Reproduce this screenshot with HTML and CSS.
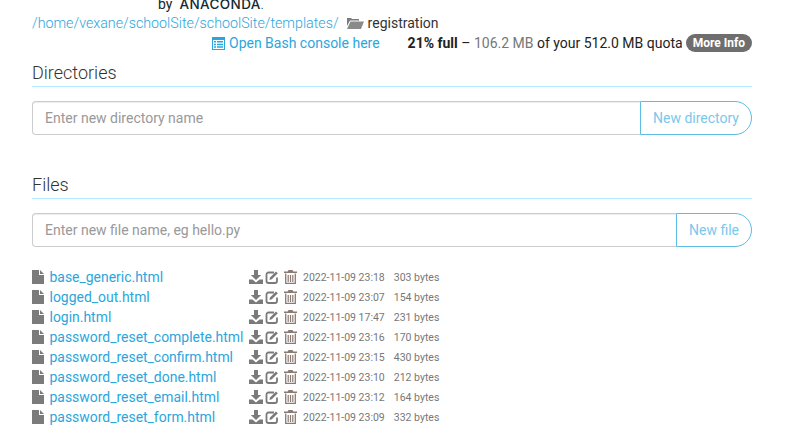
FILE: index.html
```html
<!DOCTYPE html>
<html lang="en">
<head>
<meta charset="utf-8">
<title>File browser</title>
<link rel="stylesheet" href="styles.css">
</head>
<body>
<svg class="defs" width="0" height="0" aria-hidden="true">
  <symbol id="i-file" viewBox="0 0 12 14"><path fill="#7b7b7b" d="M0 0h7v5h5v9H0z"/><path fill="#7b7b7b" d="M8 0l4 4H8z"/></symbol>
  <symbol id="i-dl" viewBox="0 0 14 14"><path fill="#7a7a7a" d="M5 0h4v5h3.2L7 10 1.8 5H5zM0 9.5h3.5L7 12.5l3.500-3H14V14H0z"/></symbol>
  <symbol id="i-edit" viewBox="0 0 14 14"><path fill="none" stroke="#7a7a7a" stroke-width="1.800" d="M9 2.500H3.500a2 2 0 0 0-2 2v6.500a2 2 0 0 0 2 2H10a2 2 0 0 0 2-2V7.500"/><path fill="#7a7a7a" d="M5 7.500L11 1.500l1.800 1.800-6 6L4.500 10z"/></symbol>
  <symbol id="i-trash" viewBox="0 0 13 14"><path fill="#8a7a72" d="M4.500 0h4l.8 1.500H13V3H0V1.500h3.700z"/><path fill="none" stroke="#8a7a72" stroke-width="1.300" d="M1.700 3.500v9.800h9.600V3.500"/><path stroke="#8a7a72" stroke-width="1.200" d="M4.200 5v7M6.500 5v7M8.800 5v7"/></symbol>
</svg>
<div class="page">
  <div class="brand"><span class="by">by</span><span class="anaconda">ANACONDA<small>.</small></span></div>
  <div class="crumbs">
    <a href="#">/home</a><a href="#">/vexane</a><a href="#">/schoolSite</a><a href="#">/schoolSite</a><a href="#">/templates</a><a href="#">/</a>
    <svg class="folder" viewBox="0 0 17 12" aria-hidden="true"><path fill="#7b7b7b" d="M0 2V1h4l1 1h7v1.500H3L0 9z"/><path fill="#8a8a8a" d="M3.500 4.500H17L14 12H0z"/></svg>
    <span class="current">registration</span>
  </div>
  <div class="status">
    <a class="bash" href="#"><svg class="console" viewBox="0 0 13 13" aria-hidden="true"><path fill="#2ba6dc" d="M0 0h13v13H0z"/><path fill="#fff" d="M1 3h11v9H1z"/><path fill="#2ba6dc" d="M2 4h2v1.500H2zM5 4h6v1.500H5zM2 6.700h2v1.500H2zM5 6.700h6v1.500H5zM2 9.300h2v1.500H2zM5 9.300h6v1.500H5z"/></svg>Open Bash console here</a>
    <span class="quota"><b>21% full</b> – <span class="used">106.2 MB</span> of your 512.0 MB quota</span>
    <a class="badge" href="#">More Info</a>
  </div>
  <h2 class="heading first">Directories</h2>
  <form class="entry">
    <input class="field" type="text" placeholder="Enter new directory name">
    <button class="submit" type="button">New directory</button>
  </form>
  <h2 class="heading second">Files</h2>
  <form class="entry">
    <input class="field" type="text" placeholder="Enter new file name, eg hello.py">
    <button class="submit" type="button">New file</button>
  </form>
  <ul class="files">
    <li class="row"><svg class="ico-file"><use href="#i-file"/></svg><a class="name" href="#">base_generic.html</a><span class="tools"><svg class="t-dl"><use href="#i-dl"/></svg><svg class="t-edit"><use href="#i-edit"/></svg><svg class="t-trash"><use href="#i-trash"/></svg></span><span class="meta">2022-11-09 23:18</span><span class="meta size">303 bytes</span></li>
    <li class="row"><svg class="ico-file"><use href="#i-file"/></svg><a class="name" href="#">logged_out.html</a><span class="tools"><svg class="t-dl"><use href="#i-dl"/></svg><svg class="t-edit"><use href="#i-edit"/></svg><svg class="t-trash"><use href="#i-trash"/></svg></span><span class="meta">2022-11-09 23:07</span><span class="meta size">154 bytes</span></li>
    <li class="row"><svg class="ico-file"><use href="#i-file"/></svg><a class="name" href="#">login.html</a><span class="tools"><svg class="t-dl"><use href="#i-dl"/></svg><svg class="t-edit"><use href="#i-edit"/></svg><svg class="t-trash"><use href="#i-trash"/></svg></span><span class="meta">2022-11-09 17:47</span><span class="meta size">231 bytes</span></li>
    <li class="row"><svg class="ico-file"><use href="#i-file"/></svg><a class="name" href="#">password_reset_complete.html</a><span class="tools"><svg class="t-dl"><use href="#i-dl"/></svg><svg class="t-edit"><use href="#i-edit"/></svg><svg class="t-trash"><use href="#i-trash"/></svg></span><span class="meta">2022-11-09 23:16</span><span class="meta size">170 bytes</span></li>
    <li class="row"><svg class="ico-file"><use href="#i-file"/></svg><a class="name" href="#">password_reset_confirm.html</a><span class="tools"><svg class="t-dl"><use href="#i-dl"/></svg><svg class="t-edit"><use href="#i-edit"/></svg><svg class="t-trash"><use href="#i-trash"/></svg></span><span class="meta">2022-11-09 23:15</span><span class="meta size">430 bytes</span></li>
    <li class="row"><svg class="ico-file"><use href="#i-file"/></svg><a class="name" href="#">password_reset_done.html</a><span class="tools"><svg class="t-dl"><use href="#i-dl"/></svg><svg class="t-edit"><use href="#i-edit"/></svg><svg class="t-trash"><use href="#i-trash"/></svg></span><span class="meta">2022-11-09 23:10</span><span class="meta size">212 bytes</span></li>
    <li class="row"><svg class="ico-file"><use href="#i-file"/></svg><a class="name" href="#">password_reset_email.html</a><span class="tools"><svg class="t-dl"><use href="#i-dl"/></svg><svg class="t-edit"><use href="#i-edit"/></svg><svg class="t-trash"><use href="#i-trash"/></svg></span><span class="meta">2022-11-09 23:12</span><span class="meta size">164 bytes</span></li>
    <li class="row"><svg class="ico-file"><use href="#i-file"/></svg><a class="name" href="#">password_reset_form.html</a><span class="tools"><svg class="t-dl"><use href="#i-dl"/></svg><svg class="t-edit"><use href="#i-edit"/></svg><svg class="t-trash"><use href="#i-trash"/></svg></span><span class="meta">2022-11-09 23:09</span><span class="meta size">332 bytes</span></li>
  </ul>
</div>
</body>
</html>
```

FILE: styles.css
```css
* { box-sizing: border-box; }
html, body { margin: 0; padding: 0; background: #fff; overflow: hidden; }
body { height: 440px; font-family: Roboto, sans-serif; font-size: 14px; color: #333; }
a { color: #2ba6dc; text-decoration: none; }
.defs { position: absolute; }
.page { width: 720px; margin-left: 32px; }
.brand { height: 14px; margin-top: -2px; margin-left: 126px; display: flex; align-items: baseline; line-height: 12px; color: #222; }
.by { font-size: 14px; margin-right: 7px; }
.anaconda { font-family: Inter, sans-serif; font-weight: 500; font-size: 13.500px; letter-spacing: .4px; color: #11292e; }
.anaconda small { font-size: 9px; }
.crumbs { height: 21px; display: flex; align-items: center; font-size: 14.250px; font-weight: 300; white-space: nowrap; }
.folder { width: 17px; height: 12px; margin-left: 8px; }
.current { margin-left: 4px; font-weight: 400; font-size: 14px; color: #333; }
.status { height: 20px; display: flex; align-items: center; justify-content: flex-end; white-space: nowrap; }
.bash { display: flex; align-items: center; margin-right: 28px; font-size: 14px; }
.console { width: 13px; height: 13px; margin-right: 4px; }
.quota { color: #222; }
.quota b { font-weight: 700; }
.used { color: #777; }
.badge { margin-left: 3px; height: 18px; line-height: 18px; padding: 0 7px; border-radius: 9px; background: #6e6e6e; color: #fff; font-size: 12px; font-weight: 700; }
.heading { margin: 0; font-size: 18px; font-weight: 300; line-height: 24px; color: #333; border-bottom: 1px solid #b5ebff; }
.heading.first { margin-top: 8px; height: 26px; }
.heading.second { margin-top: 38px; height: 26px; }
.entry { display: flex; height: 34px; margin-top: 14px; }
.field { flex: 1; min-width: 0; height: 34px; padding: 0 12px; border: 1px solid #ccc; border-right: 0; border-radius: 4px 0 0 4px; box-shadow: inset 0 1px 1px rgba(0,0,0,.075); font: 14px Roboto, sans-serif; color: #555; outline: none; }
.field::placeholder { color: #999; opacity: 1; }
.submit { height: 34px; padding: 0 12px; border: 1px solid #5bbce4; border-radius: 0 17px 17px 0; background: #fff; color: #7ac8ec; font: 14px Roboto, sans-serif; }
.files { list-style: none; margin: 20px 0 0; padding: 0; }
.row { display: flex; align-items: center; height: 20px; white-space: nowrap; }
.ico-file { width: 12px; height: 14px; margin-right: 5.500px; flex: none; }
.name { width: 199.500px; flex: none; font-size: 13.950px; }
.tools { display: flex; align-items: center; width: 54px; flex: none; }
.t-dl { width: 14px; height: 14px; margin-right: 2px; }
.t-edit { width: 14px; height: 14px; margin-right: 5px; }
.t-trash { width: 13px; height: 14px; }
.meta { font-size: 10.500px; color: #777; }
.size { margin-left: 9px; }
```
